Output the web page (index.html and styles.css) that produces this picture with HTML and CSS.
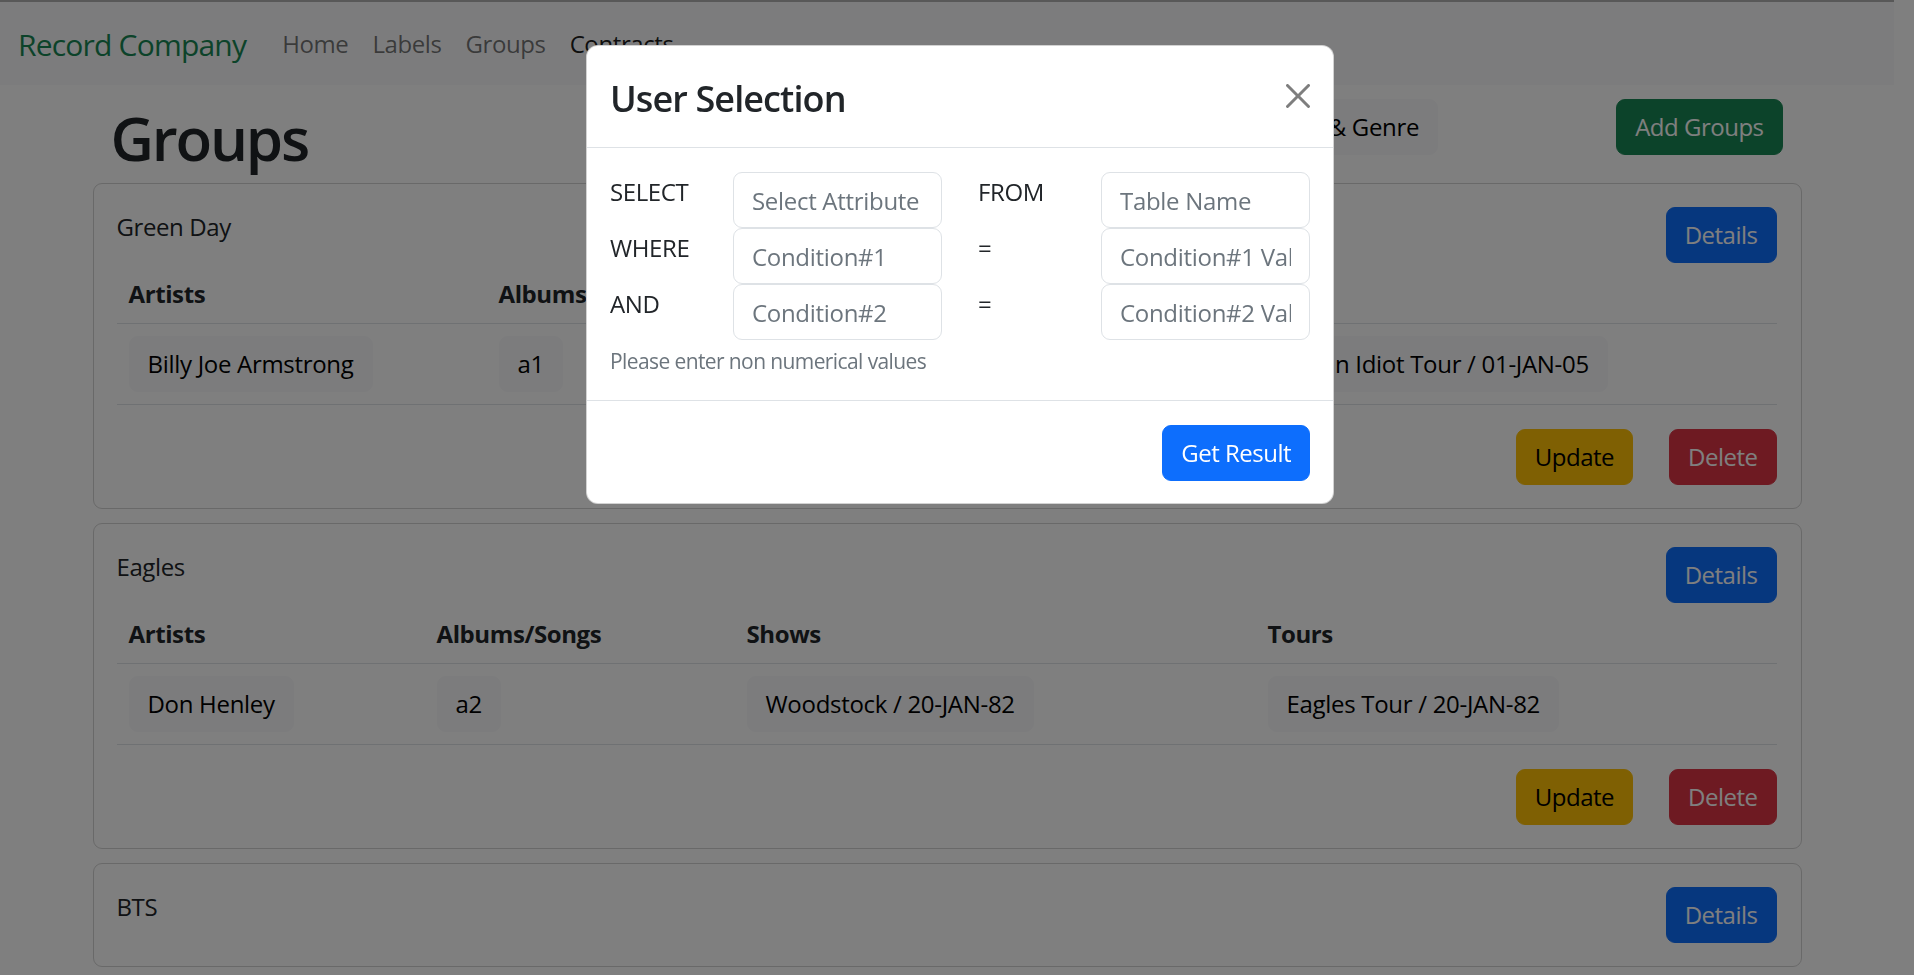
FILE: index.html
```html
<!DOCTYPE html>
<html lang="en">
<head>
<meta charset="utf-8">
<title>Record Company - Groups</title>
<link rel="stylesheet" href="styles.css">
</head>
<body>
<nav class="navbar">
  <a class="brand" href="#">Record Company</a>
  <ul class="nav">
    <li><a class="nav-link" href="#">Home</a></li>
    <li><a class="nav-link" href="#">Labels</a></li>
    <li><a class="nav-link" href="#">Groups</a></li>
    <li><a class="nav-link active" href="#">Contracts</a></li>
  </ul>
</nav>

<main class="container">
  <div class="page-head">
    <h1 class="page-title">Groups</h1>
    <button class="btn btn-light genre-btn">Label &amp; Genre</button>
    <button class="btn btn-success">Add Groups</button>
  </div>

  <section class="card">
    <div class="card-top">
      <div class="card-title">Green Day</div>
      <button class="btn btn-primary">Details</button>
    </div>
    <table class="table t1">
      <colgroup><col class="c1"><col class="c2"><col class="c3"><col class="c4"></colgroup>
      <thead>
        <tr><th>Artists</th><th>Albums/Songs</th><th>Shows</th><th>Tours</th></tr>
      </thead>
      <tbody>
        <tr>
          <td><span class="btn btn-light">Billy Joe Armstrong</span></td>
          <td><span class="btn btn-light">a1</span></td>
          <td><span class="btn btn-light">Lollapalooza / 01-JAN-05</span></td>
          <td><span class="btn btn-light">American Idiot Tour / 01-JAN-05</span></td>
        </tr>
      </tbody>
    </table>
    <div class="card-actions">
      <button class="btn btn-warning">Update</button>
      <button class="btn btn-danger">Delete</button>
    </div>
  </section>

  <section class="card">
    <div class="card-top">
      <div class="card-title">Eagles</div>
      <button class="btn btn-primary">Details</button>
    </div>
    <table class="table t2">
      <colgroup><col class="c1"><col class="c2"><col class="c3"><col class="c4"></colgroup>
      <thead>
        <tr><th>Artists</th><th>Albums/Songs</th><th>Shows</th><th>Tours</th></tr>
      </thead>
      <tbody>
        <tr>
          <td><span class="btn btn-light">Don Henley</span></td>
          <td><span class="btn btn-light">a2</span></td>
          <td><span class="btn btn-light">Woodstock / 20-JAN-82</span></td>
          <td><span class="btn btn-light">Eagles Tour / 20-JAN-82</span></td>
        </tr>
      </tbody>
    </table>
    <div class="card-actions">
      <button class="btn btn-warning">Update</button>
      <button class="btn btn-danger">Delete</button>
    </div>
  </section>

  <section class="card">
    <div class="card-top">
      <div class="card-title">BTS</div>
      <button class="btn btn-primary">Details</button>
    </div>
  </section>
</main>

<div class="backdrop"></div>

<div class="modal">
  <div class="modal-content">
    <div class="modal-header">
      <h4 class="modal-title">User Selection</h4>
      <button class="btn-close" aria-label="Close">
        <svg viewBox="0 0 16 16" width="24" height="24"><path d="M.293.293a1 1 0 0 1 1.414 0L8 6.586 14.293.293a1 1 0 1 1 1.414 1.414L9.414 8l6.293 6.293a1 1 0 0 1-1.414 1.414L8 9.414l-6.293 6.293a1 1 0 0 1-1.414-1.414L6.586 8 .293 1.707a1 1 0 0 1 0-1.414z"/></svg>
      </button>
    </div>
    <div class="modal-body">
      <div class="query-grid">
        <label class="q-label">SELECT</label>
        <input class="form-control" placeholder="Select Attribute">
        <label class="q-label q-mid">FROM</label>
        <input class="form-control" placeholder="Table Name">

        <label class="q-label">WHERE</label>
        <input class="form-control" placeholder="Condition#1">
        <label class="q-label q-mid">=</label>
        <input class="form-control" placeholder="Condition#1 Value">

        <label class="q-label">AND</label>
        <input class="form-control" placeholder="Condition#2">
        <label class="q-label q-mid">=</label>
        <input class="form-control" placeholder="Condition#2 Value">
      </div>
      <div class="form-text">Please enter non numerical values</div>
    </div>
    <div class="modal-footer">
      <button class="btn btn-primary-solid">Get Result</button>
    </div>
  </div>
</div>
</body>
</html>
```

FILE: styles.css
```css
* { box-sizing: border-box; }

html, body {
  height: 100%;
}

body {
  margin: 0;
  padding-right: 20px;
  overflow: hidden;
  background: #fff;
  color: #212529;
  font-family: "Segoe UI", "Open Sans", "Noto Sans", sans-serif;
  font-size: 24px;
  line-height: 1.5;
  letter-spacing: -0.4px;
}

a { text-decoration: none; }

/* ---------- Navbar ---------- */
.navbar {
  display: flex;
  align-items: center;
  background: #f8f9fa;
  border-top: 2px solid #b0b0b0;
  padding: 11px 18px 12px;
}

.brand {
  color: #198754;
  font-size: 30px;
  line-height: 45px;
  letter-spacing: -0.8px;
  padding: 8.5px 0 6.5px;
  margin-right: 24px;
}

.nav {
  display: flex;
  list-style: none;
  margin: 0;
  padding: 0;
}

.nav-link {
  display: block;
  padding: 13px 12px 11px;
  line-height: 36px;
  color: rgba(0, 0, 0, 0.55);
}

.nav-link.active { color: rgba(0, 0, 0, 0.9); }

/* ---------- Main ---------- */
.container {
  width: 1709px;
  margin: 0 auto;
}

.page-head {
  display: flex;
  align-items: flex-start;
  margin-top: 14px;
  margin-bottom: 12px;
  padding: 0 19px 0 18px;
}

.page-title {
  flex: 1;
  margin: 0;
  padding-top: 3px;
  margin-bottom: -3px;
  font-size: 60px;
  font-weight: 600;
  letter-spacing: -2.2px;
  line-height: 72px;
}

.genre-btn { margin-right: 178px; }

/* ---------- Buttons ---------- */
.btn {
  display: inline-block;
  font-family: inherit;
  font-size: 24px;
  line-height: 36px;
  letter-spacing: -0.5px;
  padding: 9px 18px;
  border: 1px solid transparent;
  border-radius: 9px;
  white-space: nowrap;
  cursor: pointer;
}

.btn-light   { background: #f8f9fa; border-color: #f8f9fa; color: #000; letter-spacing: -0.3px; }
.btn-success { background: #198754; border-color: #198754; color: #fff; }
.btn-primary { background: #0d6efd; border-color: #0d6efd; color: #fff; }
.btn-primary-solid { background: #0d6efd; border-color: #0d6efd; color: #fff; }
.btn-warning { background: #ffc107; border-color: #ffc107; color: #000; }
.btn-danger  { background: #dc3545; border-color: #dc3545; color: #fff; }

/* ---------- Cards ---------- */
.card {
  border: 1px solid rgba(0, 0, 0, 0.175);
  border-radius: 9px;
  padding: 23px 24px 23px 23px;
  margin-bottom: 14px;
}

.card-top {
  display: flex;
  justify-content: space-between;
  align-items: flex-start;
}

.card-title { padding-top: 2px; }

.table {
  width: 100%;
  border-collapse: collapse;
  table-layout: fixed;
  margin-bottom: 24px;
}

.table th,
.table td {
  padding: 12px;
  text-align: left;
  border-bottom: 1px solid #dee2e6;
  white-space: nowrap;
}

.table th { font-weight: 700; line-height: 36px; padding-top: 13px; padding-bottom: 11px; }

.t1 .c1 { width: 370px; }
.t1 .c2 { width: 313px; }
.t1 .c3 { width: 415px; }
.t1 .c4 { width: 562px; }

.t2 .c1 { width: 308px; }
.t2 .c2 { width: 310px; }
.t2 .c3 { width: 521px; }
.t2 .c4 { width: 521px; }

.card-actions {
  display: flex;
  justify-content: flex-end;
  gap: 36px;
}

/* ---------- Modal ---------- */
.backdrop {
  position: fixed;
  inset: 0;
  background: rgba(0, 0, 0, 0.5);
}

.modal {
  position: fixed;
  top: 45px;
  left: 586px;
  width: 748px;
}

.modal-content {
  background: #fff;
  border: 1px solid rgba(0, 0, 0, 0.175);
  border-radius: 12px;
}

.modal-header {
  display: flex;
  align-items: center;
  justify-content: space-between;
  padding: 23px 23px 24px;
  border-bottom: 1px solid #dee2e6;
}

.modal-title {
  margin: 0;
  padding-top: 3px;
  margin-bottom: -3px;
  font-size: 36px;
  font-weight: 600;
  letter-spacing: -0.9px;
  line-height: 54px;
}

.btn-close {
  display: flex;
  padding: 0;
  border: 0;
  background: transparent;
  opacity: 0.5;
  cursor: pointer;
}

.btn-close svg { fill: #000; }

.modal-body { padding: 24px 23px; }

.query-grid {
  display: grid;
  grid-template-columns: 123px 209px 159px 209px;
}

.q-label {
  padding-top: 2px;
  line-height: 36px;
  color: #212529;
}

.q-mid { padding-left: 36px; }

.form-control {
  display: block;
  width: 100%;
  height: 56px;
  font-family: inherit;
  font-size: 24px;
  letter-spacing: -0.3px;
  line-height: 36px;
  padding: 9px 18px;
  color: #212529;
  background: #fff;
  border: 1px solid #dee2e6;
  border-radius: 9px;
  outline: none;
}

.form-control::placeholder { color: #6c757d; opacity: 1; }

.form-text {
  margin-top: 6px;
  font-size: 21px;
  line-height: 30px;
  letter-spacing: -0.6px;
  color: #6c757d;
}

.modal-footer {
  display: flex;
  justify-content: flex-end;
  padding: 24px 23px 22px;
  border-top: 1px solid #dee2e6;
}
```
